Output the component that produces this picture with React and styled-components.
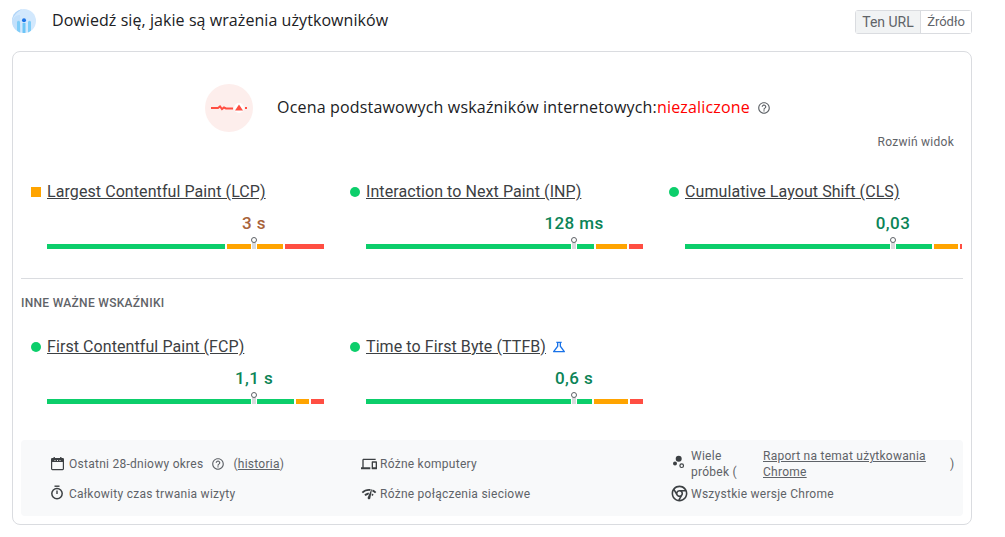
import React from "react";
import styled, { createGlobalStyle } from "styled-components";
import {
  MdOutlineDevices,
  MdOutlineNetworkCheck,
  MdOutlineHelpOutline,
  MdOutlineScience,
} from "react-icons/md";
import { RiChromeLine } from "react-icons/ri";

const Global = createGlobalStyle`
  html, body { margin: 0; padding: 0; background: #fff; }
  body { font-family: Roboto, "Liberation Sans", sans-serif; color: #3c4043; }
`;

const Page = styled.div`
  width: 1005px;
  height: 537px;
  box-sizing: border-box;
  padding: 8px 33px 0 12px;
  overflow: hidden;
`;
const Header = styled.header`
  display: flex;
  align-items: center;
  height: 26px;
  margin-bottom: 17px;
`;
const Logo = styled.svg`
  width: 24px;
  height: 24px;
  flex: none;
  margin-right: 16px;
`;
const Title = styled.h1`
  margin: 0 0 2px;
  flex: 1;
  font: 500 16px/24px "Open Sans", sans-serif;
  letter-spacing: 0.07px;
  color: #202124;
`;
const Tabs = styled.div`
  display: flex;
  width: 117px;
  height: 24px;
  margin-top: 1px;
  border: 1px solid #dadce0;
  border-radius: 3px;
  box-sizing: border-box;
`;
const Tab = styled.div`
  box-sizing: border-box;
  width: ${(p) => (p.$active ? "65px" : "50px")};
  font-size: ${(p) => (p.$active ? "14px" : "13px")};
  line-height: 22px;
  text-align: center;
  color: #5f6368;
  background: ${(p) => (p.$active ? "#f1f3f4" : "#fff")};
  border-right: ${(p) => (p.$active ? "1px solid #dadce0" : "none")};
`;
const Card = styled.section`
  border: 1px solid #dadce0;
  border-radius: 8px;
  padding: 32px 8px 8px;
  height: 474px;
  box-sizing: border-box;
`;
const Verdict = styled.div`
  display: flex;
  align-items: center;
  height: 48px;
  padding-left: 184px;
`;
const VerdictBadge = styled.svg`
  width: 48px;
  height: 48px;
  flex: none;
  margin-right: 24px;
`;
const VerdictText = styled.span`
  margin-bottom: 2px;
  font: 500 16px/24px "Open Sans", sans-serif;
  letter-spacing: 0.18px;
  color: #202124;
`;
const VerdictFail = styled.span`
  color: #f00;
`;
const VerdictHelp = styled(MdOutlineHelpOutline)`
  width: 14px;
  height: 14px;
  margin-left: 7px;
  color: #5f6368;
`;
const Expand = styled.div`
  margin: 2px 9px 0 0;
  text-align: right;
  font-size: 12px;
  line-height: 16px;
  letter-spacing: 0.26px;
  color: #5f6368;
`;
const MetricRow = styled.div`
  display: grid;
  grid-template-columns: 319px 319px 294px;
  margin: ${(p) => p.$top}px 0 0 10px;
`;
const Metric = styled.div`
  display: flex;
  flex-direction: column;
`;
const MetricHead = styled.div`
  display: flex;
  align-items: center;
  height: 24px;
`;
const Indicator = styled.span`
  width: 10px;
  height: 10px;
  flex: none;
  margin-right: 6px;
  background: ${(p) => (p.$kind === "warn" ? "#ffa400" : "#0cce6b")};
  border-radius: ${(p) => (p.$kind === "warn" ? "0" : "50%")};
`;
const MetricName = styled.a`
  font-size: 16px;
  line-height: 24px;
  letter-spacing: 0.08px;
  color: #3c4043;
  text-decoration: underline;
`;
const Lab = styled(MdOutlineScience)`
  width: 16px;
  height: 16px;
  margin-left: 5px;
  color: #1a73e8;
`;
const ValueLine = styled.div`
  height: 24px;
  margin: 7px 0 9px 16px;
`;
const Value = styled.span`
  display: inline-block;
  margin-left: ${(p) => p.$at}px;
  transform: translateX(-50%);
  font-size: 17px;
  font-weight: 500;
  line-height: 24px;
  letter-spacing: 0.4px;
  white-space: nowrap;
  color: ${(p) => (p.$kind === "warn" ? "#a8633a" : "#0b8457")};
`;
const Track = styled.div`
  position: relative;
  display: flex;
  gap: 2px;
  width: 277px;
  height: 5px;
  margin-left: 16px;
`;
const Segment = styled.span`
  flex: none;
  height: 5px;
  background: ${(p) => p.$color};
`;
const Needle = styled.span`
  position: absolute;
  left: ${(p) => p.$at - 3}px;
  top: -2px;
  width: 4px;
  height: 7px;
  background: #d8dadd;
  border-left: 1px solid #fff;
  border-right: 1px solid #fff;
`;
const NeedleHead = styled.span`
  position: absolute;
  left: ${(p) => p.$at - 3}px;
  top: -7px;
  width: 6px;
  height: 6px;
  box-sizing: border-box;
  border: 1px solid #5f6368;
  border-radius: 50%;
  background: #fff;
`;
const Rule = styled.hr`
  height: 1px;
  margin: 29px 0 0 0;
  border: 0;
  background: #dadce0;
`;
const SectionLabel = styled.h2`
  margin: 16px 0 0;
  font-size: 12px;
  font-weight: 500;
  line-height: 16px;
  letter-spacing: 0.3px;
  color: #5f6368;
`;
const Footer = styled.footer`
  display: grid;
  grid-template-columns: 311px 311px 262px;
  grid-template-rows: 32px 16px;
  row-gap: 6px;
  height: 76px;
  box-sizing: border-box;
  margin-top: 36px;
  padding: 8px 0 0 29px;
  background: #f8f9fa;
  border-radius: 4px;
  font-size: 12px;
  line-height: 16px;
  letter-spacing: 0.26px;
  color: #5f6368;
`;
const Fact = styled.div`
  display: flex;
  align-items: center;
  min-width: 0;
`;
const FactIcon = styled.span`
  display: flex;
  flex: none;
  width: 16px;
  height: 16px;
  margin-right: 3px;
  color: #3c4043;
  & > svg { width: 16px; height: 16px; overflow: visible; flex: none; }
`;
const ChromeGlyph = styled(RiChromeLine)`
  && { width: 19px; height: 19px; margin: -2px 0 0 -2px; }
`;
const FactHelp = styled(MdOutlineHelpOutline)`
  flex: none;
  width: 14px;
  height: 14px;
  margin: 0 8px;
`;
const FactLink = styled.a`
  color: #5f6368;
  text-decoration: underline;
`;
const Cell = styled.span`
  flex: none;
  box-sizing: border-box;
  width: ${(p) => p.$w}px;
  padding-right: ${(p) => p.$pad || 0}px;
`;

const GOOD = "#0cce6b", AVG = "#ffa400", BAD = "#ff4e42";

function Gauge({ kind, name, value, at, parts, lab }) {
  return (
    <Metric>
      <MetricHead>
        <Indicator $kind={kind} />
        <MetricName>{name}</MetricName>
        {lab && <Lab />}
      </MetricHead>
      <ValueLine>
        <Value $kind={kind} $at={at}>{value}</Value>
      </ValueLine>
      <Track>
        <Segment $color={GOOD} style={{ width: parts[0] }} />
        <Segment $color={AVG} style={{ width: parts[1] }} />
        <Segment $color={BAD} style={{ width: parts[2] }} />
        <Needle $at={at} />
        <NeedleHead $at={at} />
      </Track>
    </Metric>
  );
}

export default function App() {
  return (
    <Page>
      <Global />
      <Header>
        <Logo viewBox="0 0 24 24">
          <defs>
            <clipPath id="lc"><circle cx="12" cy="12" r="12" /></clipPath>
          </defs>
          <circle cx="12" cy="12" r="12" fill="#d2e8fd" />
          <g clipPath="url(#lc)">
            <path d="M0 12C2 5 6 3 10 0L0 0Z" fill="#aed4f8" />
            <path d="M0 12C2 8 4 6 8 6L9 24H0Z" fill="#c3e0fb" />
            <rect x="5" y="13" width="3" height="11" fill="#7fcdf8" />
            <rect x="10.5" y="14" width="3" height="10" fill="#6cc5f7" />
            <rect x="16" y="13" width="3" height="11" fill="#7fcdf8" />
            <circle cx="6.5" cy="13" r="1.3" fill="#7fcdf8" />
            <circle cx="17.5" cy="13" r="1.3" fill="#7fcdf8" />
            <circle cx="12" cy="11.3" r="2" fill="#1a73e8" />
          </g>
        </Logo>
        <Title>Dowiedź się, jakie są wrażenia użytkowników</Title>
        <Tabs>
          <Tab $active>Ten URL</Tab>
          <Tab>Źródło</Tab>
        </Tabs>
      </Header>
      <Card>
        <Verdict>
          <VerdictBadge viewBox="0 0 48 48">
            <circle cx="24" cy="24" r="24" fill="#fdeeec" />
            <path d="M6 24H13L15 22.5L17 25L19 23.5L21 24.5H28" fill="none" stroke="#ff4e42" strokeWidth="2" />
            <circle cx="34" cy="24" r="5" fill="#fff" />
            <path d="M34 20.6L38 26.6H30Z" fill="#ff4e42" />
            <path d="M40 24H42" stroke="#ff4e42" strokeWidth="2" />
          </VerdictBadge>
          <VerdictText>
            Ocena podstawowych wskaźników internetowych:<VerdictFail>niezaliczone</VerdictFail>
          </VerdictText>
          <VerdictHelp />
        </Verdict>
        <Expand>Rozwiń widok</Expand>
        <MetricRow $top={30}>
          <Gauge kind="warn" name="Largest Contentful Paint (LCP)" value="3 s" at={207} parts={[178, 56, 39]} />
          <Gauge kind="good" name="Interaction to Next Paint (INP)" value="128 ms" at={208} parts={[228, 31, 14]} />
          <Gauge kind="good" name="Cumulative Layout Shift (CLS)" value="0,03" at={208} parts={[247, 24, 2]} />
        </MetricRow>
        <Rule />
        <SectionLabel>INNE WAŻNE WSKAŹNIKI</SectionLabel>
        <MetricRow $top={24}>
          <Gauge kind="good" name="First Contentful Paint (FCP)" value="1,1 s" at={207} parts={[247, 13, 13]} />
          <Gauge kind="good" name="Time to First Byte (TTFB)" value="0,6 s" at={208} parts={[226, 34, 13]} lab />
        </MetricRow>
        <Footer>
          <Fact>
            <FactIcon>
              <svg viewBox="0 0 16 16">
                <rect x="1.6" y="2.6" width="11.8" height="11" rx="0.8" fill="none" stroke="currentColor" strokeWidth="1.2" />
                <rect x="1.6" y="2.6" width="11.8" height="3.4" fill="currentColor" />
                <path d="M4.2 1V3M10.8 1V3" stroke="currentColor" strokeWidth="1.3" />
                <path d="M4.5 4.5H5.5M7 4.5H8M9.5 4.5H10.5" stroke="#fff" strokeWidth="0.9" />
              </svg>
            </FactIcon>
            Ostatni 28-dniowy okres
            <FactHelp />
            (<FactLink>historia</FactLink>)
          </Fact>
          <Fact>
            <FactIcon><MdOutlineDevices /></FactIcon>
            Różne komputery
          </Fact>
          <Fact>
            <FactIcon>
              <svg viewBox="0 0 16 16">
                <circle cx="6.7" cy="2.7" r="3" fill="currentColor" />
                <circle cx="3" cy="7.5" r="2" fill="currentColor" />
                <circle cx="9.7" cy="9.7" r="1.8" fill="none" stroke="currentColor" strokeWidth="1.2" />
              </svg>
            </FactIcon>
            <Cell $w={72} $pad={10}>Wiele próbek (</Cell>
            <Cell $w={187}><FactLink>Raport na temat użytkowania Chrome</FactLink></Cell>
            )
          </Fact>
          <Fact>
            <FactIcon>
              <svg viewBox="0 0 16 16">
                <path d="M4.5 0.2H9.5" stroke="currentColor" strokeWidth="1.4" />
                <circle cx="7" cy="7.6" r="5.2" fill="none" stroke="currentColor" strokeWidth="1.5" />
                <path d="M7 4.6V8" stroke="currentColor" strokeWidth="1.4" />
              </svg>
            </FactIcon>
            Całkowity czas trwania wizyty
          </Fact>
          <Fact>
            <FactIcon><MdOutlineNetworkCheck /></FactIcon>
            Różne połączenia sieciowe
          </Fact>
          <Fact>
            <FactIcon><ChromeGlyph /></FactIcon>
            Wszystkie wersje Chrome
          </Fact>
        </Footer>
      </Card>
    </Page>
  );
}
